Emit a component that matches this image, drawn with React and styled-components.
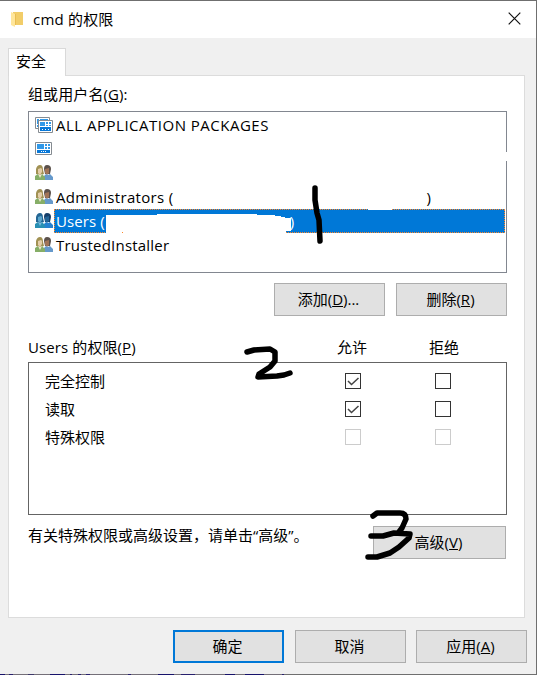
import React from "react";
import styled, { createGlobalStyle, css } from "styled-components";

const Global = createGlobalStyle`
  *, *::before, *::after { box-sizing: border-box; }
  body {
    margin: 0;
    background: #fff;
    color: #000;
    font: 15px/20px "Open Sans", "Noto Sans CJK SC", sans-serif;
    overflow: hidden;
  }
`;

const Page = styled.div`
  position: relative;
  width: 539px;
  height: 677px;
`;

const Dialog = styled.main`
  width: 537px;
  height: 675px;
  display: flex;
  flex-direction: column;
  background: #f0f0f0;
  border: solid #6f6f6f;
  border-width: 1px 1px 0 0;
`;

const TitleBar = styled.header`
  flex: 0 0 37px;
  display: flex;
  align-items: center;
  background: #fff;
  padding: 0 15px 2px 9px;
  svg { flex: none; }
`;

const Title = styled.h1`
  flex: 1;
  margin: 0 0 0 8px;
  font-size: 15px;
  font-weight: 400;
  letter-spacing: 0.2px;
`;

const Tab = styled.div`
  position: relative;
  flex: none;
  width: 58px;
  height: 28px;
  margin: 10px 0 -1px 8px;
  padding: 2px 7px;
  background: #fff;
  border: 1px solid #d9d9d9;
  border-bottom: 0;
`;

const Panel = styled.section`
  flex: 0 0 543px;
  width: 517px;
  margin-left: 8px;
  padding: 8px 17px 0 19px;
  background: #fff;
  border: 1px solid #dcdcdc;
`;

const Label = styled.div`
  height: 20px;
  white-space: nowrap;
  letter-spacing: ${(p) => p.$spacing || 0}px;
`;

const UserList = styled.div`
  height: 162px;
  margin-top: 7px;
  padding: 1px;
  border: 1px solid #828790;
`;

const UserRow = styled.div`
  display: flex;
  align-items: center;
  height: 24px;
  padding-left: 5px;
  svg { flex: none; }
`;

const UserName = styled.div`
  flex: 1;
  display: flex;
  height: 24px;
  margin-left: 1px;
  padding: 0 1px;
  line-height: 22px;
  border: 1px solid transparent;
  white-space: pre;
  letter-spacing: ${(p) => p.$spacing || 0}px;
  ${(p) => p.$selected && css`
    color: #fff;
    background: #0078d7;
    border: 1px dotted #ff8728;
  `}
`;

const Closing = styled.span`
  margin-left: ${(p) => p.$gap}px;
`;

const ButtonRow = styled.div`
  display: flex;
  justify-content: flex-end;
  gap: 11px;
  margin-top: 10px;
`;

const Button = styled.button`
  flex: none;
  width: ${(p) => p.$width || 111}px;
  height: 33px;
  padding: 0 2px 1px 0;
  font: inherit;
  color: #000;
  background: #e1e1e1;
  border: ${(p) => (p.$primary ? "2px solid #0078d7" : "1px solid #adadad")};
`;

const PermissionHead = styled.div`
  display: grid;
  grid-template-columns: 278px 92px 92px;
  margin-top: 21px;
  > :not(:first-child) { text-align: center; }
`;

const PermissionTable = styled.div`
  height: 153px;
  margin-top: 5px;
  padding-top: 4px;
  border: 1px solid #646464;
`;

const PermissionRow = styled.div`
  display: grid;
  grid-template-columns: 300px 90px 16px;
  align-items: center;
  height: 28px;
  padding-left: 16px;
`;

const Check = styled.span`
  display: block;
  width: 16px;
  height: 16px;
  border: 1px solid ${(p) => (p.$disabled ? "#ccc" : "#333")};
  background: #fff;
  svg { display: block; }
`;

const Advanced = styled.div`
  display: flex;
  justify-content: space-between;
  padding-right: 1px;
  margin-top: 11px;
`;

const Note = styled(Label)`
  margin-top: -1px;
`;

const Footer = styled.footer`
  display: grid;
  grid-template-columns: 122px 121px 111px;
  justify-content: end;
  padding: 12px 9px 0 0;
`;

const BottomEdge = styled.div`
  height: 1px;
  margin-top: auto;
  background: linear-gradient(90deg, #17126b 0 5px, #746f78 5px 9px, #28206e 9px 13px, #746f78 13px 28px, #3d3869 28px 34px, #746f78 34px 50px, #17126b 50px 65px, #746f78 65px 70px, #28206e 70px 72px, #746f78 72px 78px, #28206e 78px 81px, #746f78 81px 86px, #28206e 86px 90px, #746f78 90px 128px, #28206e 128px 131px, #746f78 131px 158px, #17126b 158px 174px, #746f78 174px 181px, #28206e 181px 195px, #746f78 195px 225px, #17126b 225px 235px, #746f78 235px 245px, #17126b 245px 264px, #746f78 264px 282px, #28206e 282px 284px, #6f6f6f 284px);
`;

const Overlay = styled.svg`
  position: absolute;
  inset: 0;
  pointer-events: none;
`;

const FolderIcon = () => (
  <svg width="16" height="18" viewBox="0 0 16 18">
    <path d="M4 2h10v13H4z" fill="#f2cd69" />
    <path d="M2 2l4 2v13l-4-2z" fill="#ffe69b" />
    <path d="M6 4h1v11H6z" fill="#e9bd52" />
  </svg>
);

const CloseIcon = () => (
  <svg width="13" height="13" viewBox="0 0 13 13">
    <path d="M.7.7l11.6 11.6M12.3.7L.7 12.3" stroke="#111" strokeWidth="1.2" />
  </svg>
);

const PackageIcon = () => (
  <svg width="18" height="18" viewBox="0 0 18 18">
    <path d="M.5 1.5h14v11H.5z" fill="#fff" stroke="#858b91" />
    <path d="M2 3h2v5H2zM2 9h2v2H2zM5 3h8v1H5z" fill="#3098e8" />
    <path d="M3.5 4.5h14v12h-14z" fill="#fff" stroke="#858b91" />
    <path d="M5 6h5v4H5zM11 6h2v2h-2zM14 6h2v2h-2zM11 9h2v1h-2zM14 9h2v1h-2z" fill="#3098e8" />
    <path d="M5 11h11v4H5z" fill="#0878d8" />
    <path d="M7 13h1v1H7zM10 13h1v1h-1zM13 13h1v1h-1z" fill="#fff" />
  </svg>
);

const TileIcon = () => (
  <svg width="18" height="14" viewBox="0 0 18 14">
    <path d="M.5.5h16v12H.5z" fill="#fff" stroke="#858b91" />
    <path d="M2 2h7v5H2zM10 2h2v2h-2zM13 2h2v2h-2zM10 5h2v2h-2zM13 5h2v2h-2z" fill="#3098e8" />
    <path d="M2 8h13v3H2z" fill="#0878d8" />
    <path d="M6 9h1v1H6zM8 9h1v1H8zM10 9h1v1h-1z" fill="#fff" />
  </svg>
);

const PeopleIcon = ({ selected }) => {
  const c = selected
    ? ["#246694", "#5ba6cd", "#2990b4", "#153e69", "#246496", "#2681cf"]
    : ["#a19153", "#e3cda8", "#86ae67", "#5b514b", "#a17457", "#6599cb"];
  return (
    <svg width="18" height="16" viewBox="0 0 18 16">
      <path d="M9 4Q9 0 12 0q4 0 4 4l-1 5h-5z" fill={c[3]} />
      <path d="M10 4l4-1v5l-2 2-2-2z" fill={c[4]} />
      <path d="M9 15v-4l2-2 2 1 2-1 3 3v3z" fill={c[5]} />
      <path d="M1 7V4Q2 0 5 0q3 0 3 5l1 4-4 1-4-1z" fill={c[0]} />
      <path d="M3 4l3-1 1 1v3l-2 3-2-2z" fill={c[1]} />
      <path d="M0 15v-4l3-2 2 2 2-2 3 3v3z" fill={c[2]} />
      <path d="M3 9l2 4 2-4-2 1z" fill={selected ? "#78b9df" : "#eee7cf"} />
    </svg>
  );
};

const Tick = () => (
  <svg width="14" height="14" viewBox="0 0 14 14">
    <path d="M2 7l3.5 3.5L12.5 4" fill="none" stroke="#444" strokeWidth="1.5" />
  </svg>
);

const users = [
  { icon: <PackageIcon />, name: "ALL APPLICATION PACKAGES", spacing: 0.5 },
  { icon: <TileIcon />, name: "" },
  { icon: <PeopleIcon />, name: "" },
  { icon: <PeopleIcon />, name: "Administrators (", gap: 253, spacing: 0.33 },
  { icon: <PeopleIcon selected />, name: "Users (", gap: 185, selected: true, spacing: 0.1 },
  { icon: <PeopleIcon />, name: "TrustedInstaller", spacing: 0.2 },
];

const permissions = [
  { name: "完全控制", allowed: true },
  { name: "读取", allowed: true },
  { name: "特殊权限", disabled: true },
];

export default function App() {
  return (
    <Page>
      <Global />
      <Dialog>
        <TitleBar><FolderIcon /><Title>cmd 的权限</Title><CloseIcon /></TitleBar>
        <Tab>安全</Tab>
        <Panel>
          <Label $spacing={0.1}>组或用户名(<u>G</u>):</Label>
          <UserList>
            {users.map((u, i) => (
              <UserRow key={i}>
                {u.icon}
                <UserName $selected={u.selected} $spacing={u.spacing}>
                  {u.name}
                  {u.gap && <Closing $gap={u.gap}>)</Closing>}
                </UserName>
              </UserRow>
            ))}
          </UserList>
          <ButtonRow>
            <Button>添加(<u>D</u>)...</Button>
            <Button>删除(<u>R</u>)</Button>
          </ButtonRow>
          <PermissionHead>
            <Label $spacing={0.1}>Users 的权限(<u>P</u>)</Label><Label>允许</Label><Label>拒绝</Label>
          </PermissionHead>
          <PermissionTable>
            {permissions.map((p) => (
              <PermissionRow key={p.name}>
                <span>{p.name}</span>
                <Check $disabled={p.disabled}>{p.allowed && <Tick />}</Check>
                <Check $disabled={p.disabled} />
              </PermissionRow>
            ))}
          </PermissionTable>
          <Advanced>
            <Note>有关特殊权限或高级设置，请单击“高级”。</Note>
            <Button $width={133}>高级(<u>V</u>)</Button>
          </Advanced>
        </Panel>
        <Footer>
          <Button $primary>确定</Button>
          <Button>取消</Button>
          <Button>应用(<u>A</u>)</Button>
        </Footer>
        <BottomEdge />
      </Dialog>
      <Overlay width="539" height="677" viewBox="0 0 539 677">
        <g fill="#fff">
          <path d="M106 215h51v-1h100v1h18v1h6v1h4v1h6v13h-5v2h-8v-1h-15v1h-15v-1h-33v1h-7v-1h-40v1h-11v-1h-35v1h-16z" />
          <path d="M106 232h12v1h-12zM123 232h34v1h-34zM168 232h40v1h-40zM215 232h33v1h-33zM263 232h15v1h-15z" />
          <path d="M505 152h3v9h-3zM368 208h24v2h-24z" />
        </g>
        <g fill="none" stroke="#000" strokeWidth="5.5" strokeLinecap="round" strokeLinejoin="round">
          <path d="M315 188L315 200L317 213L319 220L320 241" />
          <path d="M247 352L254 350L270 349L275 352L275 361L270 367L259 374L258 377L277 376L284 375L290 373" />
          <path d="M373 516L377 513L400 513Q406 513 406 519L402 528L399 532M371 536L383 536L394 533L410 534L409 538L399 547L390 553L377 557L368 557" />
        </g>
      </Overlay>
    </Page>
  );
}
